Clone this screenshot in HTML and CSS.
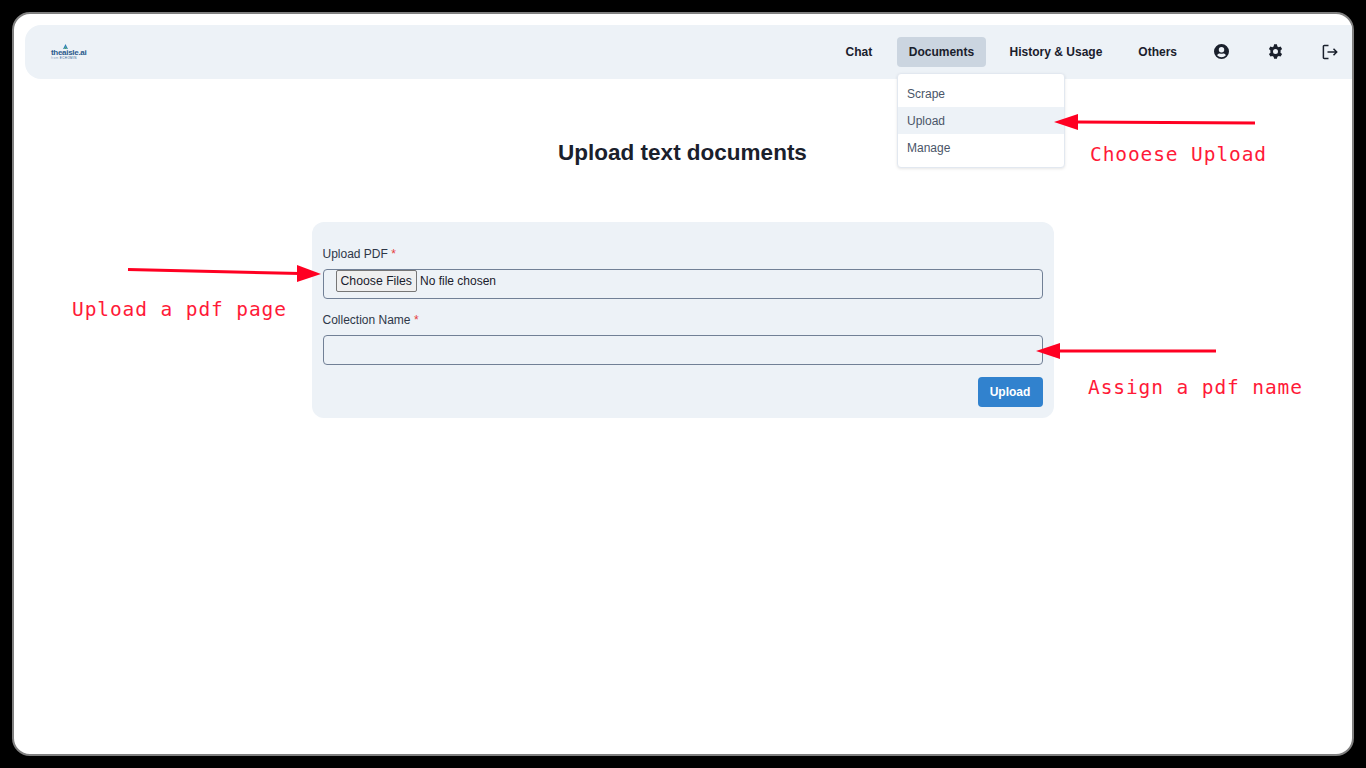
FILE: index.html
```html
<!DOCTYPE html>
<html lang="en">
<head>
  <meta charset="UTF-8">
  <meta name="viewport" content="width=device-width, initial-scale=1.0">
  <title>Upload text documents</title>
  <link rel="stylesheet" href="styles.css">
</head>
<body>
  <div class="window">
    <header class="navbar">
      <a class="logo" href="#">
        <svg class="logo-mark" viewBox="0 0 10 7" aria-hidden="true">
          <path d="M5 0 8.500 7H6.600L5 3.400 3.400 7H1.500z" fill="#2e7fb8"/>
          <path d="M5 3.400 6.600 7H3.400z" fill="#4aa66a"/>
        </svg>
        <span class="logo-name">theaisle.ai</span>
        <span class="logo-sub"><span class="logo-from">from</span> ECHOMIN</span>
      </a>
      <nav class="nav-links">
        <a class="nav-link" href="#">Chat</a>
        <div class="nav-menu">
          <a class="nav-link active" href="#">Documents</a>
          <ul class="dropdown">
            <li>Scrape</li>
            <li class="selected">Upload</li>
            <li>Manage</li>
          </ul>
        </div>
        <a class="nav-link" href="#">History &amp; Usage</a>
        <a class="nav-link" href="#">Others</a>
        <a class="nav-icon" href="#" aria-label="Profile">
          <svg class="icon-raised" viewBox="0 0 16 16" width="15" height="15" fill="currentColor">
            <path fill-rule="evenodd" d="M8 0a8 8 0 1 0 0 16A8 8 0 0 0 8 0zm0 3.200a2.900 2.900 0 1 1 0 5.800 2.900 2.900 0 0 1 0-5.800zM8 14.200a6.200 6.200 0 0 1-4.700-2.200C3.900 10.900 5 10.200 6.200 10.200c.6.2 1.200.3 1.800.3s1.200-.1 1.800-.3c1.200 0 2.300.7 2.900 1.800A6.200 6.200 0 0 1 8 14.200z"/>
          </svg>
        </a>
        <a class="nav-icon" href="#" aria-label="Settings">
          <svg class="icon-raised" viewBox="0 0 24 24" width="15" height="15" fill="currentColor">
            <path fill-rule="evenodd" d="M14.300 0.500h-4.600l-.7 3.300a9 9 0 0 0-2 1.200L3.800 3.900 1.500 7.900 4 10.200a9 9 0 0 0 0 3.600l-2.500 2.300 2.300 4 3.200-1.100a9 9 0 0 0 2 1.200l.7 3.300h4.600l.7-3.300a9 9 0 0 0 2-1.200l3.200 1.100 2.300-4-2.500-2.300a9 9 0 0 0 0-3.600l2.500-2.300-2.300-4L17 5a9 9 0 0 0-2-1.200zM12 8a4 4 0 1 1 0 8 4 4 0 0 1 0-8z"/>
          </svg>
        </a>
        <a class="nav-icon" href="#" aria-label="Log out">
          <svg viewBox="0 0 16 16" width="16" height="16" fill="none" stroke="currentColor" stroke-width="1.500">
            <path d="M6.500 1.500H2.200a.8.8 0 0 0-.8.8v11.400a.8.8 0 0 0 .8.8h4.300"/>
            <path d="M5.500 8h9M11.500 4.800 14.700 8l-3.200 3.200"/>
          </svg>
        </a>
      </nav>
    </header>

    <main class="content">
      <h1 class="page-title">Upload text documents</h1>
      <form class="upload-form">
        <div class="field">
          <label for="pdf">Upload PDF <span class="required">*</span></label>
          <input class="input file-input" type="file" id="pdf" multiple>
        </div>
        <div class="field">
          <label for="collection">Collection Name <span class="required">*</span></label>
          <input class="input" type="text" id="collection">
        </div>
        <div class="form-actions">
          <button class="btn-upload" type="button">Upload</button>
        </div>
      </form>
    </main>
  </div>

  <!-- annotations drawn on top of the screenshot -->
  <svg class="arrows" viewBox="0 0 1366 768" width="1366" height="768" aria-hidden="true">
    <path d="M1255 123 1075 122" stroke="#ff0022" stroke-width="3"/>
    <path d="M1054 122 1078 114 1078 130z" fill="#ff0022"/>
    <path d="M128 269.500 300 273.500" stroke="#ff0022" stroke-width="3"/>
    <path d="M321 274 297 282 297 265z" fill="#ff0022"/>
    <path d="M1216 351 1058 351" stroke="#ff0022" stroke-width="3"/>
    <path d="M1036 351 1060 343 1060 359z" fill="#ff0022"/>
  </svg>
  <span class="note note-choose">Chooese Upload</span>
  <span class="note note-pdf">Upload a pdf page</span>
  <span class="note note-name">Assign a pdf name</span>
</body>
</html>
```

FILE: styles.css
```css
/* General Styles */
* {
  box-sizing: border-box;
}

body {
  margin: 0;
  padding: 12px;
  height: 768px;
  overflow: hidden;
  background-color: #000;
  color: #1a202c;
  font-family: "Liberation Sans", Arial, sans-serif;
}

a {
  color: inherit;
  text-decoration: none;
}

.window {
  height: 744px;
  width: 1342px;
  padding: 11px 0 0 11px;
  background-color: #fff;
  border: 2px solid #808080;
  border-radius: 18px;
  overflow: hidden;
}

/* Navbar */
.navbar {
  display: flex;
  align-items: center;
  justify-content: space-between;
  height: 54px;
  padding-left: 26px;
  background-color: #edf2f7;
  border-radius: 16px 0 0 16px;
}

.logo {
  display: flex;
  flex-direction: column;
  width: 36px;
  line-height: 1;
}

.logo-mark {
  display: block;
  width: 7px;
  height: 5px;
  margin-left: 10.5px;
}

.logo-name {
  font-size: 8px;
  line-height: 7px;
  font-weight: 700;
  letter-spacing: -0.3px;
  white-space: nowrap;
  color: #2a5a8c;
}

.logo-sub {
  margin-top: 1px;
  font-size: 3px;
  line-height: 3px;
  letter-spacing: 0.4px;
  white-space: nowrap;
  color: #2a5a8c;
}

.logo-from {
  color: #8aa0b8;
}

.nav-links {
  display: flex;
  align-items: center;
  gap: 12px;
  padding-right: 1px;
}

.nav-link {
  display: block;
  padding: 0 12px;
  height: 30px;
  line-height: 30px;
  font-size: 12px;
  font-weight: 700;
  border-radius: 4px;
  white-space: nowrap;
}

.nav-link.active {
  padding: 0 11.5px;
  background-color: #cbd5e0;
}

.nav-menu {
  position: relative;
  margin-left: 1px;
}

.nav-icon {
  display: flex;
  align-items: center;
  justify-content: center;
  width: 42px;
  height: 30px;
}

.icon-raised {
  margin: 0 1px 1px 0;
}

.dropdown {
  position: absolute;
  top: 36px;
  left: 0;
  width: 168px;
  margin: 0;
  padding: 6px 0;
  list-style: none;
  background-color: #fff;
  border: 1px solid #e2e8f0;
  border-radius: 4px;
  box-shadow: 0 1px 3px rgba(0, 0, 0, 0.1);
  font-size: 12px;
  color: #4a5568;
}

.dropdown li {
  height: 27px;
  line-height: 28px;
  padding: 0 8.75px;
}

.dropdown li.selected {
  background-color: #edf2f7;
}

/* Form Section */
.content {
  display: flex;
  flex-direction: column;
  align-items: center;
  padding-right: 12px;
}

.page-title {
  margin: 60px 0 55px;
  font-size: 22.5px;
  line-height: 28px;
  font-weight: 700;
}

.upload-form {
  width: 742px;
  padding: 23px 11px 11px;
  background-color: #edf2f7;
  border-radius: 12px;
}

.field {
  margin-bottom: 12px;
}

.field label {
  display: block;
  margin-bottom: 6px;
  font-size: 12px;
  line-height: 18px;
  color: #2d3748;
}

.required {
  color: #e53e3e;
}

.input {
  display: block;
  width: 100%;
  height: 30px;
  padding: 0 12px;
  font-size: 12px;
  font-family: inherit;
  background: transparent;
  border: 1px solid #718096;
  border-radius: 4px;
}

.file-input {
  line-height: 22px;
}

.file-input::file-selector-button {
  height: 22px;
  margin-right: 3px;
  padding: 0 4px;
  font-size: 12.25px;
  font-family: inherit;
  color: #1a202c;
  background-color: #efefef;
  border: 1px solid #767676;
  border-radius: 2px;
}

.form-actions {
  display: flex;
  justify-content: flex-end;
}

.btn-upload {
  width: 65px;
  height: 30px;
  padding: 0;
  font-size: 12px;
  font-weight: 700;
  font-family: inherit;
  color: #fff;
  background-color: #3182ce;
  border: none;
  border-radius: 4px;
}

/* Annotations */
.arrows {
  position: absolute;
  top: 0;
  left: 0;
}

.note {
  position: absolute;
  font-family: "DejaVu Sans Mono", monospace;
  font-size: 19.5px;
  letter-spacing: 0.9px;
  line-height: 24px;
  white-space: nowrap;
  color: #ff1a38;
}

.note-choose {
  left: 1090px;
  top: 143px;
}

.note-pdf {
  left: 72px;
  top: 298px;
}

.note-name {
  left: 1088px;
  top: 376px;
}
```
